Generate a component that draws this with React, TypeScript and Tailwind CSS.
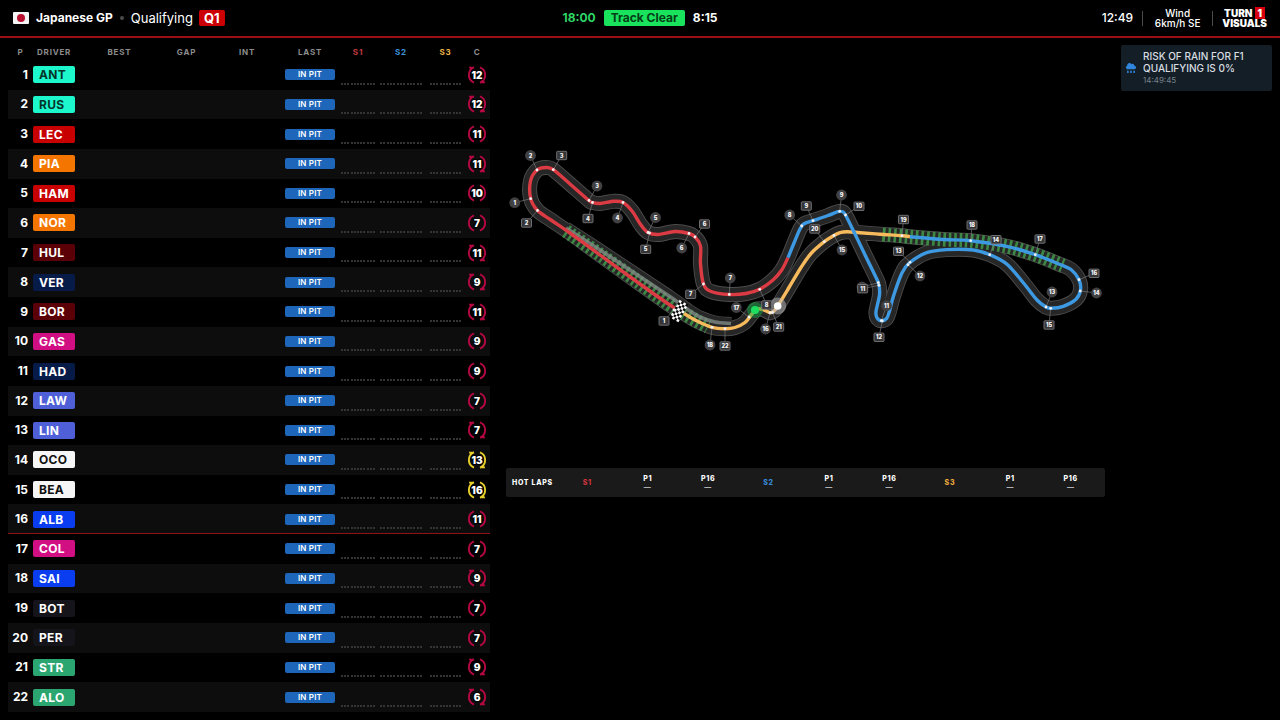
import { FaCloudRain } from "react-icons/fa";

type Driver = {
  code: string;
  team: keyof typeof TEAM;
  laps: number;
  used?: boolean;
  medium?: boolean;
};

const TEAM = {
  mercedes: "bg-[#1cf7cb] text-[#04352b]",
  ferrari: "bg-[#c80000] text-white",
  mclaren: "bg-[#f47600] text-white",
  audi: "bg-[#5c0007] text-white",
  redbull: "bg-[#071b49] text-white",
  alpine: "bg-[#d20f82] text-white",
  racingbulls: "bg-[#4f5fd7] text-white",
  haas: "bg-[#f6f6f6] text-[#111111]",
  williams: "bg-[#0a3cf0] text-white",
  cadillac: "bg-[#14141a] text-white",
  aston: "bg-[#2ba671] text-white",
};

const DRIVERS: Driver[] = [
  { code: "ANT", team: "mercedes", laps: 12, used: true },
  { code: "RUS", team: "mercedes", laps: 12, used: true },
  { code: "LEC", team: "ferrari", laps: 11 },
  { code: "PIA", team: "mclaren", laps: 11, used: true },
  { code: "HAM", team: "ferrari", laps: 10 },
  { code: "NOR", team: "mclaren", laps: 7 },
  { code: "HUL", team: "audi", laps: 11, used: true },
  { code: "VER", team: "redbull", laps: 9, used: true },
  { code: "BOR", team: "audi", laps: 11, used: true },
  { code: "GAS", team: "alpine", laps: 9 },
  { code: "HAD", team: "redbull", laps: 9 },
  { code: "LAW", team: "racingbulls", laps: 7 },
  { code: "LIN", team: "racingbulls", laps: 7, used: true },
  { code: "OCO", team: "haas", laps: 13, used: true, medium: true },
  { code: "BEA", team: "haas", laps: 16, used: true, medium: true },
  { code: "ALB", team: "williams", laps: 11 },
  { code: "COL", team: "alpine", laps: 7 },
  { code: "SAI", team: "williams", laps: 9, used: true },
  { code: "BOT", team: "cadillac", laps: 7 },
  { code: "PER", team: "cadillac", laps: 7 },
  { code: "STR", team: "aston", laps: 9, used: true },
  { code: "ALO", team: "aston", laps: 6, used: true },
];

const CUTOFF = 16;

function Header() {
  return (
    <header className="grid h-[38px] shrink-0 grid-cols-[1fr_auto_1fr] items-center border-b-2 border-[#9d0d14] px-[13px] text-[12px] leading-4 text-white">
      <div className="flex items-center">
        <svg viewBox="0 0 16 12" className="mr-[7px] h-3 w-4" role="img" aria-label="Japan">
          <rect width="16" height="12" rx="1" fill="#f4f4f4" />
          <circle cx="8" cy="6" r="4" fill="#b8102e" />
        </svg>
        <span className="font-bold">Japanese GP</span>
        <span className="mx-[7px] size-1 rounded-full bg-[#4a4a4a]" />
        <span className="text-[13px]">Qualifying</span>
        <span className="ml-[6px] rounded-[2px] bg-[#cc0004] px-[5px] text-[13px] font-bold">Q1</span>
      </div>
      <div className="flex items-center gap-2 font-bold">
        <span className="text-[#2fd566]">18:00</span>
        <span className="rounded-[2px] bg-[#19e35c] px-[7px] text-[#053d17]">Track Clear</span>
        <span>8:15</span>
      </div>
      <div className="flex items-center justify-end">
        <span className="font-medium">12:49</span>
        <span className="ml-[9px] h-[15px] w-px bg-[#4b4b4b]" />
        <p className="w-[69px] text-center text-[10px] leading-[10px] font-medium">
          Wind
          <br />
          6km/h SE
        </p>
        <span className="h-[15px] w-px bg-[#4b4b4b]" />
        <p className="ml-[9px] text-center text-[10px] leading-[10px] font-black">
          TURN <span className="bg-[#d9000d] px-[3px]">1</span>
          <br />
          VISUALS
        </p>
      </div>
    </header>
  );
}

function Dots({ count, width }: { count: number; width: string }) {
  return (
    <div className={`mx-auto flex justify-between pb-[5px] ${width}`}>
      {Array.from({ length: count }, (_, i) => (
        <span key={i} className="h-[2px] w-[2px] bg-[#343434]" />
      ))}
    </div>
  );
}

function Tyre({ laps, used, medium }: { laps: number; used?: boolean; medium?: boolean }) {
  const color = medium ? "#e9cf2c" : "#b60842";
  return (
    <svg viewBox="0 0 20 20" className="mx-auto block size-5" role="img" aria-label={`${laps} laps`}>
      <g fill="none" stroke={color} strokeWidth="1.9">
        <path d="M7 2.4a8.2 8.2 0 0 0 0 15.2" />
        <path d="M13 2.4a8.2 8.2 0 0 1 0 15.2" />
      </g>
      {used && (
        <g fill={color}>
          <path d="M1.8 1.8h5.2l-3.6 3.8z" />
          <path d="M18.2 18.2h-5.2l3.6-3.8z" />
        </g>
      )}
      <text x="10" y="13.6" textAnchor="middle" fontSize="10" fontWeight="900" fill="#ffffff" stroke="#000000" strokeWidth="2" paintOrder="stroke">
        {laps}
      </text>
    </svg>
  );
}

function Timing() {
  return (
    <section className="w-[482px] shrink-0">
      <table className="h-full w-full table-fixed border-collapse text-white">
        <colgroup>
          <col className="w-[25px]" />
          <col className="w-[48px]" />
          <col className="w-[77px]" />
          <col className="w-[57px]" />
          <col className="w-[64px]" />
          <col className="w-[62px]" />
          <col className="w-[34px]" />
          <col className="w-[52px]" />
          <col className="w-[37px]" />
          <col className="w-[26px]" />
        </colgroup>
        <thead>
          <tr className="h-[22px] text-[8px] leading-[12px] tracking-widest text-[#8c8c8c]">
            <th className="pt-[5px] font-bold">P</th>
            <th className="pt-[5px] pl-[4px] text-left font-bold">DRIVER</th>
            <th className="pt-[5px] font-bold">BEST</th>
            <th className="pt-[5px] font-bold">GAP</th>
            <th className="pt-[5px] font-bold">INT</th>
            <th className="pt-[5px] font-bold">LAST</th>
            <th className="pt-[5px] font-bold text-[#c73a42]">S1</th>
            <th className="pt-[5px] font-bold text-[#3f94dc]">S2</th>
            <th className="pt-[5px] font-bold text-[#efb54a]">S3</th>
            <th className="pt-[5px] font-bold">C</th>
          </tr>
        </thead>
        <tbody>
          {DRIVERS.map((d, i) => (
            <tr
              key={d.code}
              className={`${i % 2 ? "bg-[#0d0d0d]" : ""} ${i + 1 === CUTOFF ? "shadow-[inset_0_-1px_0_#8e1218]" : ""}`}
            >
              <td className="pr-[5px] text-right text-[12px] leading-4 font-bold">{i + 1}</td>
              <td>
                <span
                  className={`block h-[17px] w-[42px] rounded-[2px] pl-[6px] text-[12px] leading-[17px] font-bold tracking-wide ${TEAM[d.team]}`}
                >
                  {d.code}
                </span>
              </td>
              <td />
              <td />
              <td />
              <td>
                <span className="mx-auto block h-[11px] w-[50px] rounded-[2px] bg-[#1d66b9] text-center text-[8px] leading-[11px] font-semibold tracking-wide">
                  IN PIT
                </span>
              </td>
              <td className="align-bottom">
                <Dots count={11} width="w-[34px]" />
              </td>
              <td className="align-bottom">
                <Dots count={13} width="w-[42px]" />
              </td>
              <td className="align-bottom">
                <Dots count={10} width="w-[31px]" />
              </td>
              <td>
                <Tyre laps={d.laps} used={d.used} medium={d.medium} />
              </td>
            </tr>
          ))}
        </tbody>
      </table>
    </section>
  );
}

type Pt = [number, number];

const SECTOR_1: Pt[] = [
  [676, 309], [664, 301], [640, 284], [600, 255], [570, 233], [551, 220], [537.5, 210.5], [530.7, 198.7], [530.5, 181],
  [537, 170], [546, 167.5], [553.3, 169.7], [570, 184], [589, 200.5], [592.5, 202.5], [600, 203.5], [614, 201.3],
  [623, 202.5], [632, 211], [641, 225], [648, 232.5], [658, 234.5], [675, 231.5], [689, 233.5], [695, 237],
  [700.5, 246], [700.5, 264], [703.5, 284], [711, 291.5], [729.3, 294.5], [746, 293.5], [759.7, 289.3], [773, 280],
  [781.7, 270], [788, 257.7],
];
const SECTOR_2: Pt[] = [
  [788, 257.7], [794, 243], [800, 229], [804, 223.8], [813, 220.7], [828, 215.5], [838, 211.7], [842.5, 211.7],
  [845.5, 215], [855, 234], [867, 259], [876.5, 278.5], [879, 285.3], [879.5, 295], [876, 311.7], [877, 317.8],
  [881.5, 320.7], [886.7, 318.3], [889.5, 311], [893.5, 296], [901.7, 273.5], [909, 263.3], [926.7, 252.7],
  [946.7, 249.6], [973.3, 250], [989.7, 254.7], [1006.7, 264], [1023.5, 283], [1037, 300], [1046, 307],
  [1051, 308.3], [1063.3, 306.3], [1076, 299.3], [1080.5, 290], [1079, 279.7], [1071, 269.5], [1060, 264.5],
  [1035.3, 254.7], [1006.7, 246.3], [970.7, 240.7], [943.3, 239.5], [910, 236.7],
];
const SECTOR_3: Pt[] = [
  [910, 236.7], [902, 235.7], [880, 234.2], [860, 232.7], [847, 231.8], [840, 232.7], [833, 236], [824.3, 241.7],
  [811, 253.5], [801, 267.5], [789, 287.5], [777.7, 306], [774, 311], [770, 312.7], [763, 309.5], [757, 309], [752, 314],
  [745, 322.5], [735, 327.5], [725, 328.7], [712, 327.3], [697, 321], [684, 313.5],
];
const PIT_LANE: Pt[] = [[566, 228], [600, 250], [636, 274], [672, 298], [687, 309], [700, 317], [715, 322], [731, 323.5]];
const DETECTION_ZONES: Pt[][] = [
  [[566, 231], [600, 254.5], [640, 283], [676, 309], [684, 313.5], [697, 321], [708, 327]],
  [[1063, 265.5], [1035.3, 254.7], [1006.7, 246.3], [970.7, 240.7], [943.3, 239.5], [910, 236.7], [881, 234.3]],
];

/** Catmull-Rom spline through the points, as cubic Béziers. */
function spline(pts: Pt[]): string {
  let d = `M${pts[0][0]} ${pts[0][1]}`;
  for (let i = 0; i < pts.length - 1; i++) {
    const a = pts[i - 1] ?? pts[i];
    const b = pts[i];
    const c = pts[i + 1];
    const e = pts[i + 2] ?? c;
    d += `C${b[0] + (c[0] - a[0]) / 6} ${b[1] + (c[1] - a[1]) / 6} ${c[0] - (e[0] - b[0]) / 6} ${c[1] - (e[1] - b[1]) / 6} ${c[0]} ${c[1]}`;
  }
  return d;
}

const FULL = spline([...SECTOR_1, ...SECTOR_2.slice(1), ...SECTOR_3.slice(1), SECTOR_1[0]]);
const PIT = spline(PIT_LANE);

/* number, label x, label y, anchor x, anchor y */
type Marker = [number, number, number, number, number];

const CORNERS: Marker[] = [
  [1, 514.7, 202.7, 530.7, 198.7], [2, 530.5, 155.5, 537, 170], [3, 597, 186, 589, 200.5], [4, 617.5, 218, 623, 202.5],
  [5, 655.5, 217.5, 648, 232.5], [6, 681.7, 248, 689, 233.5], [7, 730.3, 278, 729.3, 294.5], [8, 789.7, 215, 801.7, 226],
  [9, 841.5, 195, 839.7, 211.3], [10, 862, 287, 878.3, 282.7], [11, 886.5, 305.7, 881.3, 320.7],
  [12, 920, 276, 908, 264.7], [13, 1052, 292, 1046, 307], [14, 1096.5, 293, 1080.3, 291], [15, 842, 250, 834, 235.5],
  [16, 765.5, 329, 770, 312.7], [17, 736.3, 307.5, 749, 317], [18, 710, 345, 712, 327.3],
];
const MARSHAL_POSTS: Marker[] = [
  [1, 664, 321, 674, 310], [2, 526.5, 223, 537.5, 210.5], [3, 561.7, 155.5, 553.3, 169.7], [4, 588, 218.5, 592.5, 202.5],
  [5, 645.7, 249.3, 649.5, 233], [6, 704.5, 224, 695, 237], [7, 690.7, 294.3, 703.5, 284], [8, 766.7, 305, 759.7, 289.3],
  [9, 806.3, 206, 813, 220.7], [10, 859, 206.3, 845.5, 215], [11, 862.7, 288.7, 879, 285.3],
  [12, 879, 337.3, 882.3, 321], [13, 898.5, 251.3, 910, 262.3], [14, 996, 239.7, 989.7, 254.7],
  [15, 1049, 325, 1050.7, 308.3], [16, 1094, 273.3, 1079, 279.7], [17, 1040, 239, 1035.3, 254.7],
  [18, 972, 225, 970.7, 240.7], [19, 903.5, 219.5, 902, 235.7], [20, 814.7, 229, 824.3, 241.7],
  [21, 778.7, 327, 772.5, 312.5], [22, 725, 346, 725, 328.7],
];

function MarkerMark({ marker, square }: { marker: Marker; square?: boolean }) {
  const [n, x, y, ax, ay] = marker;
  return (
    <g>
      <line x1={x} y1={y} x2={ax} y2={ay} stroke="#77777a" strokeWidth="0.7" />
      <circle cx={ax} cy={ay} r="1.4" fill="#f1f1f1" />
      {square ? (
        <rect x={x - 5} y={y - 4.2} width="10" height="8.4" rx="0.8" fill="#353538" stroke="#77777b" strokeWidth="0.9" />
      ) : (
        <circle cx={x} cy={y} r="5.4" fill="#414144" />
      )}
      <text x={x} y={y + 2} textAnchor="middle" fontSize="5.5" fontWeight="900" fill="#f0f0f0">
        {n}
      </text>
    </g>
  );
}

function TrackMap() {
  return (
    <svg viewBox="506 38 599 430" className="block w-full" role="img" aria-label="Suzuka circuit map">
      <g fill="none" strokeLinejoin="round">
        <path d={PIT} stroke="#4c4c4c" strokeWidth="13" />
        <path d={FULL} stroke="#4c4c4c" strokeWidth="15" />
        <path d={PIT} stroke="#262626" strokeWidth="11.5" />
        <path d={FULL} stroke="#262626" strokeWidth="13.2" />
        {DETECTION_ZONES.map((zone, i) => (
          <path key={i} d={spline(zone)} stroke="#3c8844" strokeWidth="14" strokeDasharray="2.6 2.9" />
        ))}
        <path d={PIT} stroke="#7f8a84" strokeWidth="3.6" strokeOpacity="0.8" />
        <path d={spline(SECTOR_1)} stroke="#dd3b44" strokeWidth="3.4" />
        <path d={spline(SECTOR_3)} stroke="#f7ba5c" strokeWidth="3.4" />
        <path d={spline(SECTOR_2)} stroke="#3d9ae2" strokeWidth="3.4" />
      </g>
      <g transform="translate(679 311) rotate(30)">
        <rect x="-5" y="-10" width="10" height="20" fill="#0a0a0a" />
        {Array.from({ length: 32 }, (_, i) => {
          const col = i % 4;
          const row = Math.floor(i / 4);
          return (col + row) % 2 ? null : (
            <rect key={i} x={-5 + col * 2.5} y={-10 + row * 2.5} width="2.6" height="2.6" fill="#ffffff" />
          );
        })}
      </g>
      {CORNERS.map((m) => (
        <MarkerMark key={m[0]} marker={m} />
      ))}
      <circle cx="755" cy="310" r="8" fill="#12a844" fillOpacity="0.5" />
      <circle cx="755" cy="310" r="4" fill="#1ede5f" />
      <circle cx="777.7" cy="306" r="8.5" fill="#bdbdbd" fillOpacity="0.5" />
      <circle cx="777.7" cy="306" r="3.8" fill="#ffffff" />
      {MARSHAL_POSTS.map((m) => (
        <MarkerMark key={m[0]} marker={m} square />
      ))}
    </svg>
  );
}

const SECTORS = [
  { name: "S1", color: "text-[#cf343d]" },
  { name: "S2", color: "text-[#3787d3]" },
  { name: "S3", color: "text-[#e9a73f]" },
];

function HotLaps() {
  return (
    <section className="flex h-[29px] items-center rounded-[2px] bg-[#1a1a1a] pr-1 text-[7px] font-extrabold tracking-widest text-white">
      <h2 className="w-[51px] shrink-0 pt-[2px] pl-[6px] whitespace-nowrap">HOT LAPS</h2>
      <div className="grid flex-1 grid-cols-9 items-center text-center">
        {SECTORS.map((s) => (
          <div key={s.name} className="contents">
            <span className={`pt-[2px] ${s.color}`}>{s.name}</span>
            <p className="leading-[9px]">
              P1
              <br />
              <span className="font-normal">—</span>
            </p>
            <p className="leading-[9px]">
              P16
              <br />
              <span className="font-normal">—</span>
            </p>
          </div>
        ))}
      </div>
    </section>
  );
}

function RainNotice() {
  return (
    <aside className="mt-[7px] flex w-[151px] shrink-0 items-center gap-[7px] self-start rounded-[2px] bg-[#141e26] py-[5px] pl-[5px] text-[10px] leading-3 font-medium text-[#d9dee2]">
      <FaCloudRain className="size-[10px] shrink-0 text-[#2f86dc]" aria-hidden="true" />
      <div className="whitespace-nowrap">
        <p>
          RISK OF RAIN FOR F1
          <br />
          QUALIFYING IS 0%
        </p>
        <time className="block text-[8px] font-normal text-[#76828b]">14:49:45</time>
      </div>
    </aside>
  );
}

export default function App() {
  return (
    <div className="flex h-screen min-h-[600px] flex-col overflow-hidden bg-black font-['Inter',sans-serif]">
      <Header />
      <main className="flex min-h-0 flex-1 gap-4 px-2 pb-2">
        <Timing />
        <div className="min-w-0 flex-1">
          <TrackMap />
          <HotLaps />
        </div>
        <RainNotice />
      </main>
    </div>
  );
}
